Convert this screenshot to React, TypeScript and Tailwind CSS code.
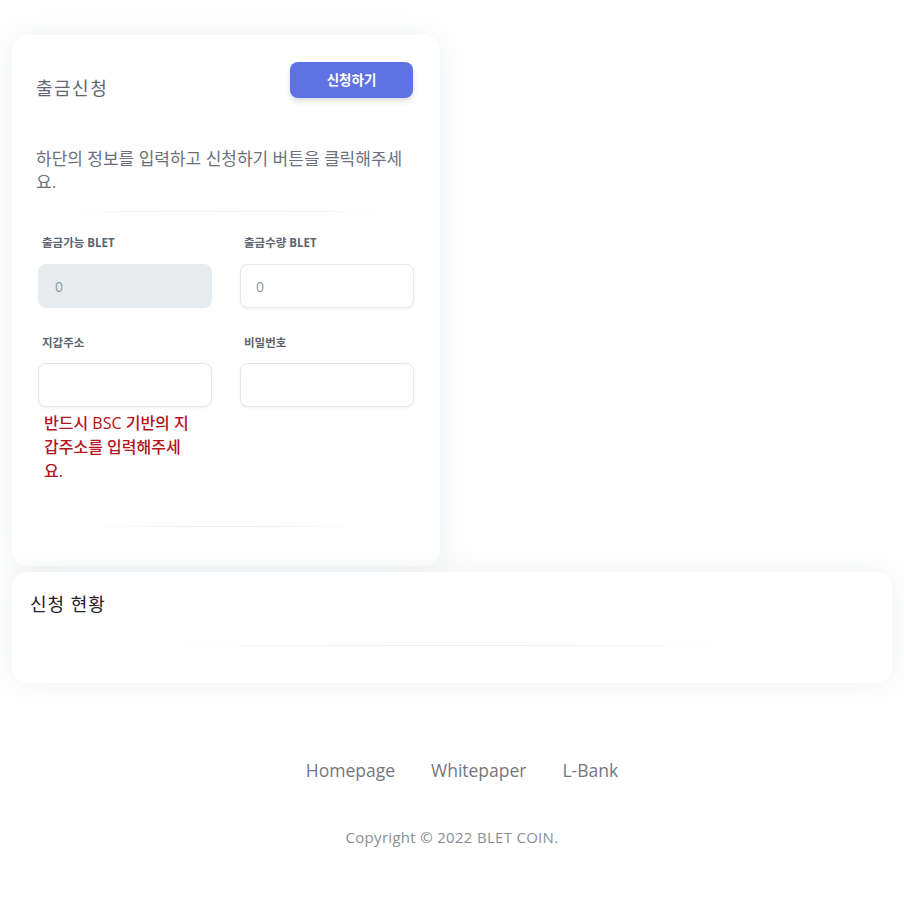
export default function App() {
  const font = { fontFamily: '"Open Sans", "Noto Sans CJK KR", sans-serif' }

  return (
    <div className="min-h-screen bg-white pt-[35px] pb-10" style={font}>
      {/* Withdraw request card */}
      <div className="ml-3 w-[428px] rounded-2xl bg-white pt-[27px] pb-[39px] shadow-[0_0_2rem_0_rgba(136,152,170,0.15)]">
        <div className="flex items-start justify-between pl-6 pr-[27px]">
          <h3 className="mt-[14px] text-[18px] leading-6 tracking-[1.5px] text-[#5f6672]">출금신청</h3>
          <button className="h-9 w-[123px] rounded-lg bg-[#5e72e4] text-[13.5px] font-bold text-white shadow-[0_4px_6px_rgba(50,50,93,0.11),0_1px_3px_rgba(0,0,0,0.08)]">
            신청하기
          </button>
        </div>

        <p className="mt-[47px] ml-6 w-[374px] break-all text-[17px] leading-[23px] text-[#6b717c]">
          하단의 정보를 입력하고 신청하기 버튼을 클릭해주세요.
        </p>

        <div className="mx-6 mt-[18px] h-px bg-gradient-to-r from-transparent via-[#ececef] to-transparent" />

        <div className="mt-[23px] grid grid-cols-2 gap-x-[28px] px-[26px]">
          <div>
            <label className="block pl-1 text-[11.5px] font-bold leading-4 text-[#5d6473]">출금가능 BLET</label>
            <input
              disabled
              value="0"
              readOnly
              className="mt-[13px] h-[44px] w-full rounded-lg bg-[#e9ecef] pl-[17px] text-[14px] text-[#8898aa] outline-none"
            />
          </div>
          <div>
            <label className="block pl-1 text-[11.5px] font-bold leading-4 text-[#5d6473]">출금수량 BLET</label>
            <input
              value="0"
              readOnly
              className="mt-[13px] h-[44px] w-full rounded-lg border border-[#e4e7eb] bg-white pl-[15px] text-[14px] text-[#8898aa] shadow-[0_1px_3px_rgba(50,50,93,0.08)] outline-none"
            />
          </div>

          <div className="mt-[27px]">
            <label className="block pl-1 text-[11.5px] font-bold leading-4 text-[#5d6473]">지갑주소</label>
            <input className="mt-[12px] h-[44px] w-full rounded-lg border border-[#e4e7eb] bg-white px-4 text-[14px] shadow-[0_1px_3px_rgba(50,50,93,0.08)] outline-none" />
            <p className="mt-1 ml-[6px] w-[149px] break-all text-[16px] font-medium leading-6 text-[#b5121b]">
              반드시 BSC 기반의 지갑주소를 입력해주세요.
            </p>
          </div>
          <div className="mt-[27px]">
            <label className="block pl-1 text-[11.5px] font-bold leading-4 text-[#5d6473]">비밀번호</label>
            <input
              type="password"
              className="mt-[12px] h-[44px] w-full rounded-lg border border-[#e4e7eb] bg-white px-4 text-[14px] shadow-[0_1px_3px_rgba(50,50,93,0.08)] outline-none"
            />
          </div>
        </div>

        <div className="mx-[60px] mt-[43px] h-px bg-gradient-to-r from-transparent via-[#ececef] to-transparent" />
      </div>

      {/* Request status card */}
      <div className="mx-3 mt-[6px] rounded-2xl bg-white pt-[20px] pb-[37px] shadow-[0_0_2rem_0_rgba(136,152,170,0.15)]">
        <h3 className="pl-[18px] text-[18px] leading-6 tracking-[1px] text-[#1f2128]">신청 현황</h3>
        <div className="mx-[110px] mt-[29px] h-px bg-gradient-to-r from-transparent via-[#ececef] to-transparent" />
      </div>

      {/* Footer */}
      <footer className="mt-[75px] flex flex-col items-center">
        <nav className="flex gap-9 pl-5 text-[17.5px] leading-6 text-[#74777d]">
          <a href="#">Homepage</a>
          <a href="#">Whitepaper</a>
          <a href="#">L-Bank</a>
        </nav>
        <p className="mt-[45px] text-[15px] leading-5 tracking-[0.3px] text-[#8a8d93]">Copyright © 2022 BLET COIN.</p>
      </footer>
    </div>
  )
}
